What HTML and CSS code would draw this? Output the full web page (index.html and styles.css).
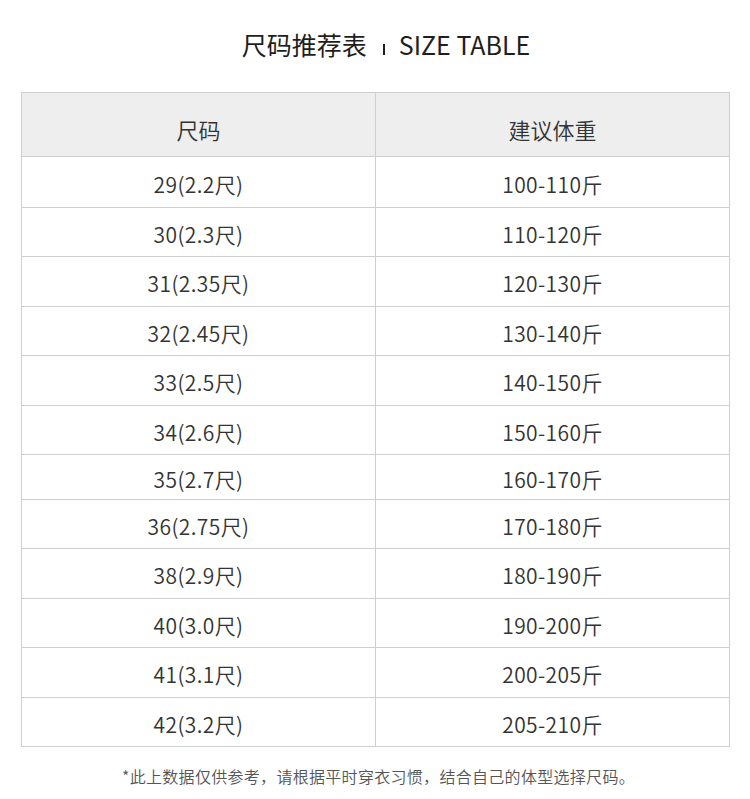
FILE: index.html
```html
<!DOCTYPE html>
<html lang="zh-CN">
<head>
<meta charset="utf-8">
<title>尺码推荐表</title>
<link rel="stylesheet" href="styles.css">
</head>
<body>
<div class="page">
  <h1 class="title"><span>尺码推荐表</span><span class="sep"></span><span>SIZE TABLE</span></h1>
  <div class="table">
    <div class="cell head">尺码</div><div class="cell head">建议体重</div>
    <div class="cell">29(2.2尺)</div><div class="cell">100-110斤</div>
    <div class="cell">30(2.3尺)</div><div class="cell">110-120斤</div>
    <div class="cell">31(2.35尺)</div><div class="cell">120-130斤</div>
    <div class="cell">32(2.45尺)</div><div class="cell">130-140斤</div>
    <div class="cell">33(2.5尺)</div><div class="cell">140-150斤</div>
    <div class="cell">34(2.6尺)</div><div class="cell">150-160斤</div>
    <div class="cell">35(2.7尺)</div><div class="cell">160-170斤</div>
    <div class="cell">36(2.75尺)</div><div class="cell">170-180斤</div>
    <div class="cell">38(2.9尺)</div><div class="cell">180-190斤</div>
    <div class="cell">40(3.0尺)</div><div class="cell">190-200斤</div>
    <div class="cell">41(3.1尺)</div><div class="cell">200-205斤</div>
    <div class="cell">42(3.2尺)</div><div class="cell">205-210斤</div>
  </div>
  <p class="note">*此上数据仅供参考，请根据平时穿衣习惯，结合自己的体型选择尺码。</p>
</div>
</body>
</html>
```

FILE: styles.css
```css
html, body {
  margin: 0;
  padding: 0;
  background: #ffffff;
}
body {
  font-family: "Noto Sans CJK SC", "Noto Sans", sans-serif;
  color: #333333;
}
.page {
  width: 750px;
}
.title {
  box-sizing: border-box;
  height: 92px;
  margin: 0;
  padding-top: 28px;
  padding-left: 22px;
  font-size: 25px;
  line-height: 32px;
  font-weight: 400;
  color: #1e1e1e;
  display: flex;
  justify-content: center;
  align-items: baseline;
}
.sep {
  display: inline-block;
  width: 2px;
  height: 11px;
  background: #1e1e1e;
  margin: 0 14px 0 16px;
}
.table {
  margin-left: 21px;
  width: 708px;
  border-top: 1px solid #cfcfcf;
  border-left: 1px solid #cfcfcf;
  display: grid;
  grid-template-columns: 354px 354px;
  grid-template-rows: 64px 51px 49px 50px 49px 50px 49px 45px 49px 50px 49px 50px 49px;
}
.cell {
  box-sizing: border-box;
  border-right: 1px solid #cfcfcf;
  border-bottom: 1px solid #cfcfcf;
  display: flex;
  align-items: center;
  justify-content: center;
  padding-top: 3px;
  font-size: 21px;
  font-weight: 350;
  letter-spacing: 0.4px;
  line-height: 24px;
  color: #333333;
}
.head {
  background: #eeeeee;
  padding-top: 8px;
  font-size: 22px;
  letter-spacing: 0;
}
.note {
  margin: 17px 0 0 0;
  text-align: center;
  font-size: 16px;
  font-weight: 350;
  letter-spacing: 0.3px;
  line-height: 24px;
  color: #555555;
  padding-left: 7px;
}
```
